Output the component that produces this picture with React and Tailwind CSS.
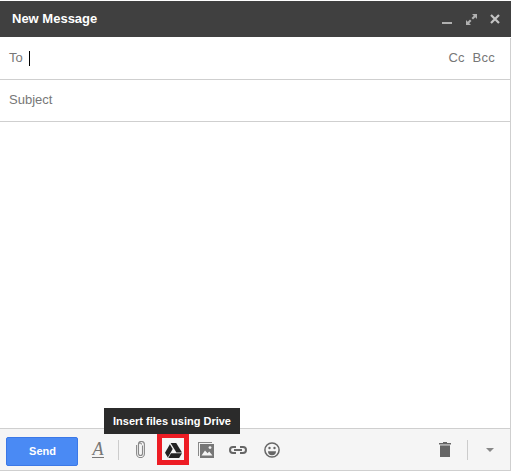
function DriveIcon() {
  return (
    <svg width="17" height="15" viewBox="0 0 17 15" fill="#222" className="mt-[4px]">
      <path d="M5.6 0h5.6l5.8 9.6h-5.6L5.6 0z" />
      <path d="M4.9 1.2l2.8 4.7L2.8 14.4 0 9.7 4.9 1.2z" />
      <path d="M6 10.3h11L14.2 15H3.3L6 10.3z" />
    </svg>
  );
}

function ImageIcon() {
  return (
    <svg width="16" height="16" viewBox="0 0 16 16">
      <path d="M0 0h14v1H1v13H0z" fill="#888" />
      <path d="M2 2h14v14H2z" fill="#777" />
      <path d="M3.5 13.5l3.5-5 2.6 2.8 1.6-1.8 3.3 4z" fill="#f5f5f5" />
      <circle cx="12" cy="5.6" r="1.4" fill="#f5f5f5" />
    </svg>
  );
}

function ClipIcon() {
  return (
    <svg width="9" height="17" viewBox="0 0 9 17" fill="none" stroke="#888" strokeWidth="1.1">
      <path d="M6.5 4.5v8a2 2 0 0 1-4 0V3.5a1.5 1.5 0 0 1 3 0M.6 4v8.7a3.9 3.9 0 0 0 7.8 0V3.6a3 3 0 0 0-6-.2" />
    </svg>
  );
}

function LinkIcon() {
  return (
    <svg width="18" height="8" viewBox="0 0 18 8" fill="none" stroke="#666" strokeWidth="2">
      <path d="M7 1H4a3 3 0 0 0 0 6h3M11 1h3a3 3 0 0 1 0 6h-3M5 4h8" />
    </svg>
  );
}

function SmileIcon() {
  return (
    <svg width="16" height="16" viewBox="0 0 16 16">
      <circle cx="8" cy="8" r="7.1" fill="none" stroke="#666" strokeWidth="1.5" />
      <circle cx="5.5" cy="6" r="1.2" fill="#666" />
      <circle cx="10.5" cy="6" r="1.2" fill="#666" />
      <path d="M4 9.2h8a4 4 0 0 1-8 0z" fill="#666" />
    </svg>
  );
}

function TrashIcon() {
  return (
    <svg width="12" height="15" viewBox="0 0 12 15" fill="#666">
      <path d="M4 0h4v1h4v1.6H0V1h4z" />
      <path d="M1 3.4h10V15H1z" />
    </svg>
  );
}

export default function App() {
  return (
    <div className="relative w-[511px] h-[471px] bg-white flex flex-col font-['Liberation_Sans',Arial,sans-serif] overflow-hidden">
      <div className="mt-px h-[36px] bg-[#404040] flex items-center pl-3 pr-[11px] shrink-0">
        <span className="text-white text-[13px] font-bold flex-1">New Message</span>
        <div className="flex items-center">
          <span className="w-[10px] h-[2px] bg-[#b0b0b0] mt-[8px]" />
          <svg width="11" height="11" viewBox="0 0 11 11" fill="#b0b0b0" className="ml-[14px]">
            <path d="M6 0h5v5L9.3 3.2 7 5.5 5.5 4 7.8 1.7zM0 11V6l1.7 1.8L4 5.5 5.5 7 3.2 9.3 5 11z" />
          </svg>
          <svg width="10" height="10" viewBox="0 0 10 10" stroke="#c4c4c4" strokeWidth="2.2" className="ml-[13px]">
            <path d="M1 1l8 8M9 1l-8 8" />
          </svg>
        </div>
      </div>

      <div className="h-[43px] border-b border-[#cfcfcf] flex items-center pl-[9px] pr-[16px] shrink-0 text-[13px] text-[#777]">
        <span>To</span>
        <span className="ml-[6px] w-px h-[15px] bg-black" />
        <span className="flex-1" />
        <span>Cc</span>
        <span className="ml-[8px] tracking-[0.3px]">Bcc</span>
      </div>

      <div className="h-[42px] border-b border-[#cfcfcf] flex items-center pl-[9px] pb-[2px] shrink-0 text-[13px] text-[#777]">
        Subject
      </div>

      <div className="flex-1" />

      <div className="h-[43px] bg-[#f5f5f5] border-y border-[#cfcfcf] flex items-center pl-[6px] shrink-0">
        <button className="w-[72px] h-[29px] mt-[3px] pl-px bg-[#4a8af4] border border-[#3b78e7] rounded-[2px] text-white text-[11px] font-bold">
          Send
        </button>
        <span className="ml-[14px] w-[12px] h-[16px] flex justify-center border-b border-[#777] font-['Liberation_Serif',serif] italic text-[#777] text-[18px] leading-[15px]">
          A
        </span>
        <span className="ml-[14px] w-px h-[20px] bg-[#ccc]" />
        <span className="ml-[17px] flex w-[9px]">
          <ClipIcon />
        </span>
        <span className="ml-[12px] w-[32px] h-[32px] mb-[2px] border-[5px] border-[#ed1c24] flex items-center justify-center">
          <DriveIcon />
        </span>
        <span className="ml-[9px] flex">
          <ImageIcon />
        </span>
        <span className="ml-[15px] flex">
          <LinkIcon />
        </span>
        <span className="ml-[17px] flex">
          <SmileIcon />
        </span>
        <span className="flex-1" />
        <TrashIcon />
        <span className="ml-[16px] w-px h-[20px] bg-[#ccc]" />
        <span className="ml-[18px] mr-[17px] w-0 h-0 border-x-[4px] border-x-transparent border-t-[4px] border-t-[#888]" />
      </div>

      <div className="absolute left-[104px] top-[408px] w-[136px] h-[26px] bg-[#2b2b2b] text-white text-[11px] font-bold flex items-center justify-center">
        Insert files using Drive
      </div>
      <div className="absolute right-0 top-[38px] bottom-0 w-px bg-[#cfcfcf]" />
    </div>
  );
}
